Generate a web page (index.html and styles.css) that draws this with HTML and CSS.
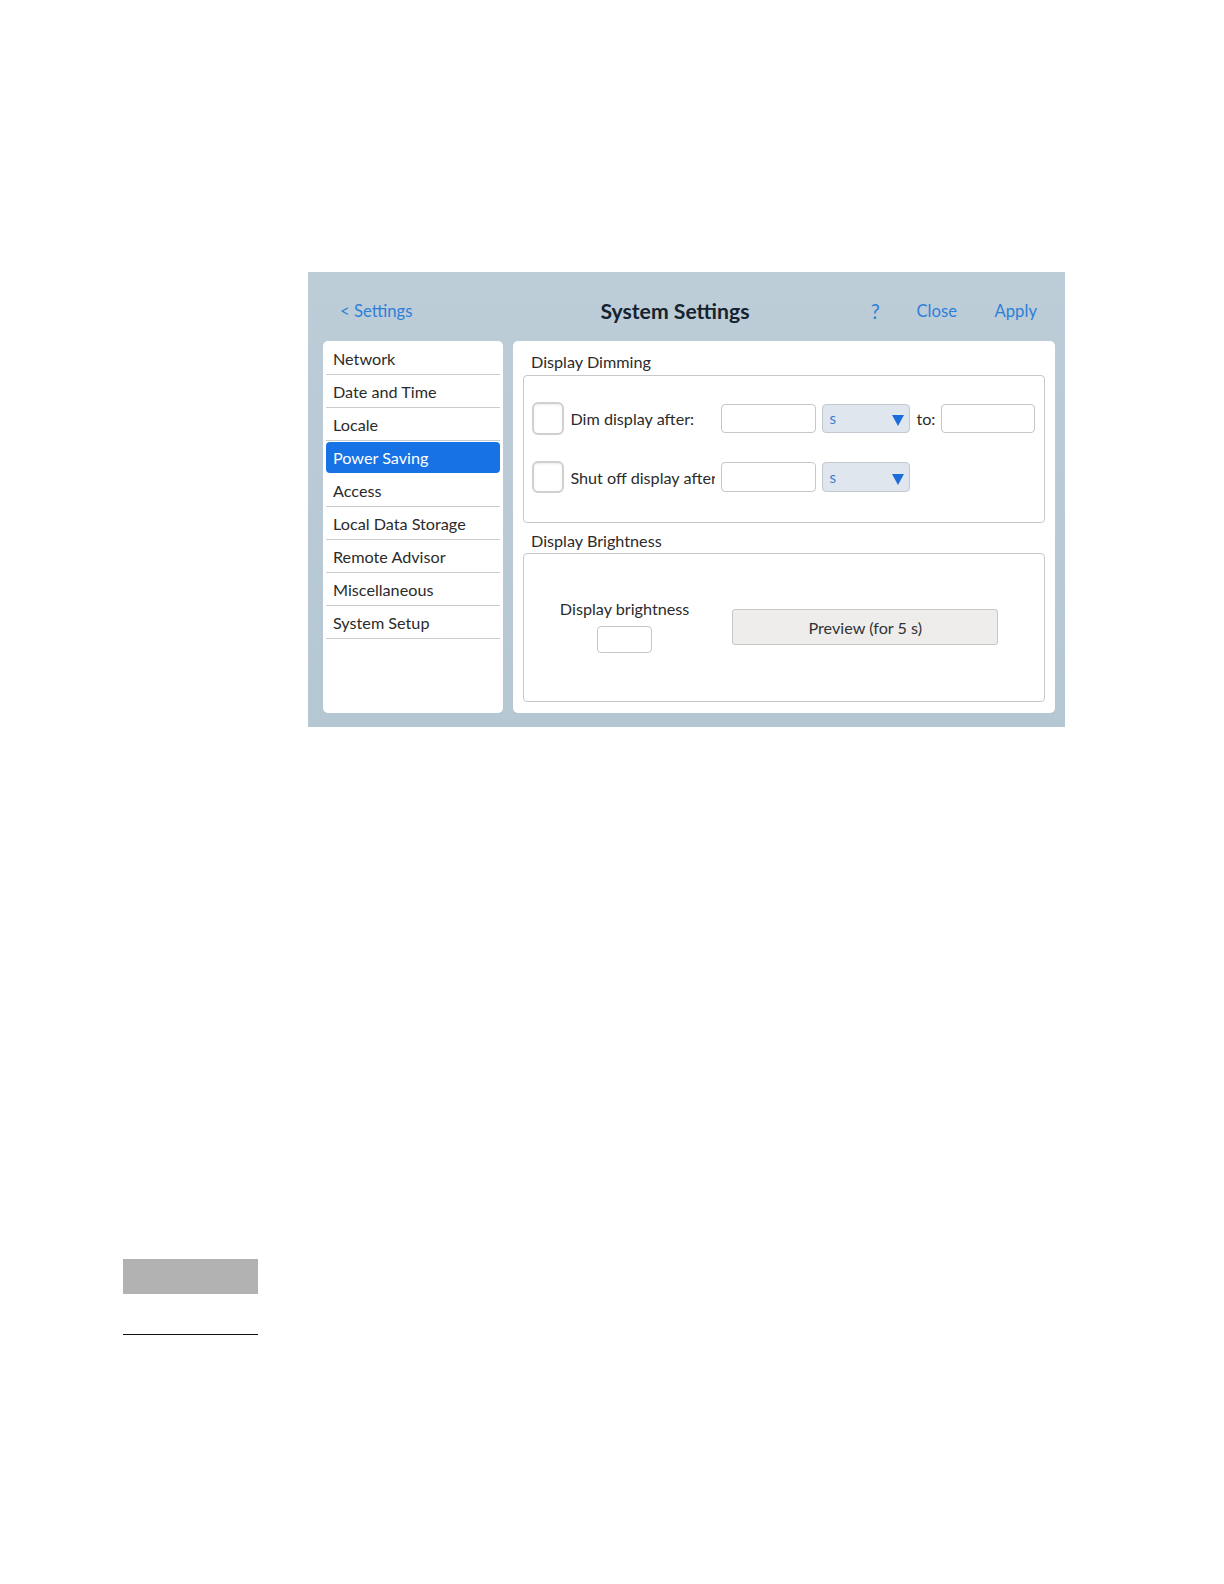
FILE: index.html
```html
<!DOCTYPE html>
<html lang="en">

<head>
    <meta charset="UTF-8">
    <title>System Settings - Power Saving</title>
    <link rel="stylesheet" href="styles.css">
</head>

<body>

    <div class="screen">
        <div class="topbar">
            <a class="back-link" href="#">&lt; Settings</a>
            <h1 class="title">System Settings</h1>
            <div class="actions">
                <a href="#" class="help">?</a>
                <a href="#">Close</a>
                <a href="#">Apply</a>
            </div>
        </div>

        <div class="content">
            <ul class="side-menu">
                <li>Network</li>
                <li>Date and Time</li>
                <li>Locale</li>
                <li class="active">Power Saving</li>
                <li>Access</li>
                <li>Local Data Storage</li>
                <li>Remote Advisor</li>
                <li>Miscellaneous</li>
                <li>System Setup</li>
            </ul>

            <div class="panel">
                <div class="group-title">Display Dimming</div>
                <div class="group-box dimming">
                    <div class="row">
                        <span class="check"></span>
                        <span class="row-label">Dim display after:</span>
                        <input type="text" class="field">
                        <div class="unit-select"><span>s</span><i class="arrow"></i></div>
                        <span class="to">to:</span>
                        <input type="text" class="field last">
                    </div>
                    <div class="row">
                        <span class="check"></span>
                        <span class="row-label">Shut off display after</span>
                        <input type="text" class="field">
                        <div class="unit-select"><span>s</span><i class="arrow"></i></div>
                    </div>
                </div>

                <div class="group-title second">Display Brightness</div>
                <div class="group-box brightness">
                    <div class="bright-col">
                        <span>Display brightness</span>
                        <input type="text" class="small-field">
                    </div>
                    <button class="preview-btn">Preview (for 5 s)</button>
                </div>
            </div>
        </div>
    </div>

    <div class="footer-tab"></div>
    <div class="footer-rule"></div>

</body>

</html>
```

FILE: styles.css
```css
* {
    box-sizing: border-box;
}

body {
    margin: 0;
    background-color: #fff;
    font-family: Lato, "Liberation Sans", sans-serif;
    color: #2b2b2b;
}

.screen {
    width: 757px;
    height: 455px;
    margin: 272px 0 0 308px;
    padding: 0 10px 14px 15px;
    background: linear-gradient(180deg, #bccdd8 0%, #b5c7d3 100%);
    display: flex;
    flex-direction: column;
}

.topbar {
    height: 69px;
    display: flex;
    align-items: center;
    padding: 8px 18px 0 17px;
}

.topbar a {
    color: #2f7fd8;
    text-decoration: none;
    font-size: 16.7px;
}

.title {
    margin: 0 0 0 188px;
    font-size: 21.2px;
    font-weight: 700;
    color: #16222d;
}

.actions {
    margin-left: auto;
    display: flex;
    gap: 37.5px;
    align-items: center;
}

.actions .help {
    font-size: 20.2px;
    margin-right: -1px;
}

.content {
    flex: 1;
    display: flex;
    gap: 10px;
}

.side-menu {
    width: 180px;
    flex-shrink: 0;
    margin: 0;
    padding: 1px 3px 0;
    list-style: none;
    background-color: #fff;
    border-radius: 5px;
}

.side-menu li {
    height: 33px;
    line-height: 34px;
    padding-left: 7px;
    font-size: 16.2px;
    border-bottom: 1px solid #c9cdd0;
}

.side-menu li.active {
    background-color: #1672e5;
    color: #fff;
    border-radius: 4px;
    height: 31px;
    line-height: 32px;
    margin: 1px 0 1px;
    border-bottom: none;
}

.panel {
    flex: 1;
    min-width: 0;
    background-color: #fff;
    border-radius: 5px;
    padding: 10px;
}

.group-title {
    font-size: 16.2px;
    line-height: 22.2px;
    padding-left: 8px;
    margin-bottom: 2px;
}

.group-title.second {
    margin-top: 7px;
    margin-bottom: 1px;
}

.group-box {
    border: 1px solid #c6c8ca;
    border-radius: 4px;
}

.dimming {
    height: 147.6px;
    padding: 26px 8px 0;
    display: flex;
    flex-direction: column;
    gap: 26.3px;
}

.row {
    display: flex;
    align-items: center;
    height: 32.4px;
}

.check {
    width: 32.4px;
    height: 32.4px;
    border: 2px solid #d0d0d0;
    border-radius: 6px;
    box-shadow: inset 0 1px 2px rgba(0, 0, 0, 0.08);
    flex-shrink: 0;
}

.row-label {
    width: 151px;
    padding-left: 6px;
    white-space: nowrap;
    overflow: hidden;
    font-size: 16.2px;
    flex-shrink: 0;
}

.field {
    width: 95px;
    height: 29.3px;
    border: 1px solid #c6c6c6;
    border-radius: 4px;
    margin: 0 0 0 6px;
    padding: 0;
    flex-shrink: 0;
}

.field.last {
    width: 94px;
}

.unit-select {
    width: 88px;
    height: 29.3px;
    margin-left: 6px;
    background-color: #dfe6ed;
    border: 1px solid #c3c9cf;
    border-radius: 4px;
    display: flex;
    align-items: center;
    padding: 0 5px 0 6px;
    color: #3b7ad2;
    font-size: 15px;
    flex-shrink: 0;
}

.arrow {
    margin-left: auto;
    margin-top: 4px;
    width: 0;
    height: 0;
    border-left: 6.5px solid transparent;
    border-right: 6.5px solid transparent;
    border-top: 11px solid #1a6ddb;
}

.to {
    margin-left: 6px;
    font-size: 16.2px;
    width: 19px;
    flex-shrink: 0;
}

.brightness {
    height: 148.6px;
    display: flex;
    align-items: center;
    padding-left: 35.4px;
}

.bright-col {
    display: flex;
    flex-direction: column;
    align-items: center;
    gap: 8px;
    font-size: 16.2px;
    width: 130.4px;
    margin-top: -3px;
}

.small-field {
    width: 55.6px;
    height: 27.3px;
    border: 1px solid #c6c6c6;
    border-radius: 4px;
    padding: 0;
}

.preview-btn {
    width: 266px;
    height: 36.4px;
    margin-left: 42.5px;
    background-color: #eeedeb;
    border: 1px solid #c6c6c4;
    border-radius: 3px;
    font-family: Lato, "Liberation Sans", sans-serif;
    font-size: 16.2px;
    color: #333;
}

.footer-tab {
    width: 134.5px;
    height: 35.4px;
    margin: 532px 0 0 123.3px;
    background-color: #b2b2b2;
}

.footer-rule {
    width: 134.5px;
    height: 1px;
    margin: 39.4px 0 0 123.3px;
    background-color: #111;
}
```
